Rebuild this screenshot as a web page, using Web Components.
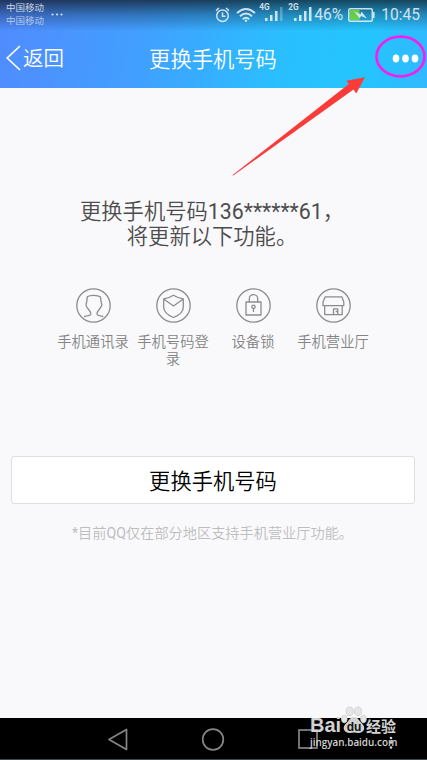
<!DOCTYPE html>
<html lang="zh-CN">
<head>
<meta charset="utf-8">
<title>更换手机号码</title>
<style>
	body {
		margin: 0;
		background: #f9f9fb;
		font-family: Roboto, "Noto Sans CJK SC", sans-serif;
		font-weight: 350;
	}
</style>
</head>
<body>
<phone-screen>
	<app-header slot="header" back="返回">更换手机号码</app-header>
	<feature-intro>
		更换手机号码<span>136******61</span>，<br>将更新以下功能。
		<feature-item slot="items" icon="contacts">手机通讯录</feature-item>
		<feature-item slot="items" icon="login">手机号码登录</feature-item>
		<feature-item slot="items" icon="lock">设备锁</feature-item>
		<feature-item slot="items" icon="shop">手机营业厅</feature-item>
	</feature-intro>
	<action-button>更换手机号码</action-button>
	<foot-note><span>*</span>目前<span>QQ</span>仅在部分地区支持手机营业厅功能。</foot-note>
	<nav-bar slot="footer"></nav-bar>
	<site-watermark slot="overlay"></site-watermark>
	<pointer-marks slot="overlay"></pointer-marks>
</phone-screen>

<script>
function define(name, render) {
	customElements.define(name, class extends HTMLElement {
		constructor() {
			super();
			this.attachShadow({ mode: 'open' });
			this.shadowRoot.innerHTML = render(this);
		}
	});
}

define('phone-screen', () => `
	<style>
	:host {
		position: relative;
		display: flex;
		flex-direction: column;
		width: 427px;
		height: 760px;
		overflow: hidden;
	}
	main {
		flex: 1;
		display: flex;
		flex-direction: column;
	}
	</style>
	<slot name="header"></slot>
	<main><slot></slot></main>
	<slot name="footer"></slot>
	<slot name="overlay"></slot>
`);

define('status-bar', () => `
	<style>
	:host {
		display: flex;
		height: 30px;
		color: #fff;
		opacity: 0.78;
	}
	.carrier {
		padding: 2px 0 0 6px;
		font-size: 9.5px;
		line-height: 12.7px;
	}
	.carrier div + div { opacity: 0.8; }
	.more { margin: 13px 0 0 7px; width: 12px; height: 3px; }
	.right {
		margin-left: auto;
		display: flex;
		align-items: center;
		padding-right: 7px;
		font-size: 15.6px;
		font-weight: 400;
		line-height: 30px;
	}
	svg { display: block; }
	.alarm { margin-right: 6px; }
	.wifi { margin-right: 3px; }
	.signal { display: flex; position: relative; width: 29px; height: 30px; }
	.signal.second { width: 26px; }
	.signal span {
		font-size: 8.3px;
		font-weight: 700;
		line-height: 9px;
		padding-top: 3px;
	}
	.signal svg { position: absolute; left: 5px; top: 6px; }
	.battery { margin: 0 6px 0 5px; }
	</style>
	<div class="carrier"><div>中国移动</div><div>中国移动</div></div>
	<svg class="more" viewBox="0 0 12 3" fill="#fff"><circle cx="1.5" cy="1.5" r="1.1"/><circle cx="6" cy="1.5" r="1.1"/><circle cx="10.5" cy="1.5" r="1.1"/></svg>
	<div class="right">
		<svg class="alarm" width="15" height="16" viewBox="0 0 15 16" fill="none" stroke="#fff" stroke-width="1.5"><circle cx="7.5" cy="8.7" r="5.8"/><path d="M7.5 5.2v4h3M1 3.6 4 1M14 3.6 11 1"/></svg>
		<svg class="wifi" width="20" height="16" viewBox="0 0 20 16" fill="none" stroke="#fff" stroke-width="2"><path d="M1 6Q10-2 19 6M4 9.2Q10 3.8 16 9.2M6.8 12.2Q10 9.2 13.2 12.2"/><circle cx="10" cy="13.8" r="1.2" fill="#fff" stroke="none"/></svg>
		<div class="signal"><span>4G</span><svg width="19" height="16"><g fill="#fff"><path d="M1 12h2.500v3H1zM6 9h2.500v6H6zM11 5h2.500v10H11z"/><path d="M16 1h2.500v14H16z" opacity=".35"/></g></svg></div>
		<div class="signal second"><span>2G</span><svg width="19" height="16"><path fill="#fff" d="M1 12h2.500v3H1zM6 9h2.500v6H6zM11 5h2.500v10H11zM16 1h2.500v14H16z"/></svg></div>
		<span>46%</span>
		<svg class="battery" width="27" height="14" viewBox="0 0 27 14"><rect x=".8" y=".8" width="23.500" height="12.400" rx="1.500" fill="none" stroke="#fff" stroke-width="1.500"/><path d="M25 4h1.600v6H25z" fill="#fff"/><path d="M2 2h9.500v10H2z" fill="#7be02a"/><path d="M6 3.200l6.500 3 1-2.700L19 10.500l-6-2.600-1.200 2.600z" fill="#fff"/></svg>
		<span>10:45</span>
	</div>
`);

define('app-header', el => `
	<style>
	:host {
		display: block;
		height: 88px;
		color: #fff;
		background:
			linear-gradient(rgba(15, 20, 30, 0.72), rgba(15, 30, 50, 0.35) 14px, transparent 31px),
			linear-gradient(98deg, #518bff 0%, #419fff 33%, #2abfff 66%, #24c5ff 85%, #31b8ff 100%);
	}
	.bar {
		display: grid;
		grid-template-columns: 1fr auto 1fr;
		align-items: center;
		height: 56px;
		font-size: 21.3px;
	}
	.back {
		display: flex;
		align-items: center;
		gap: 2px;
		padding-left: 6px;
		font-size: 20.5px;
	}
	.back span, .title { padding-bottom: 2px; }
	.title { margin-right: 1px; }
	.menu { justify-self: end; padding: 1px 8px 0 0; }
	svg { display: block; }
	</style>
	<status-bar></status-bar>
	<div class="bar">
		<div class="back">
			<svg width="15" height="26" viewBox="0 0 15 26" fill="none" stroke="#fff" stroke-width="1.700"><path d="M14 1 1.200 13 14 25"/></svg>
			<span>${el.getAttribute('back')}</span>
		</div>
		<div class="title"><slot></slot></div>
		<svg class="menu" width="27" height="9" fill="#fff"><ellipse cx="4" cy="4.500" rx="3.300" ry="3.900"/><ellipse cx="13.500" cy="4.500" rx="3.300" ry="3.900"/><ellipse cx="23" cy="4.500" rx="3.300" ry="3.900"/></svg>
	</div>
`);

define('feature-intro', () => `
	<style>
	:host {
		display: block;
		padding-top: 111px;
		height: 257px;
		text-align: center;
	}
	.text {
		margin-right: 3px;
		color: #4c4c4c;
		font-size: 21.3px;
		line-height: 25px;
	}
	::slotted(span) { font-weight: 400; }
	.items {
		display: grid;
		grid-template-columns: repeat(4, 80px);
		justify-content: center;
		margin: 39px 1px 0 0;
	}
	</style>
	<div class="text"><slot></slot></div>
	<div class="items"><slot name="items"></slot></div>
`);

const icons = {
	contacts: '<path d="M8 28.500c3.500-.4 6.500-.8 6.800-2.300.2-1.700-.3-2.400-1.800-4.200-1.400-1.600-3-3.300-3-5.200 1-3 1-5.500 1.300-8 2.500-2 10.500-2 13.200.2.300 2.500.5 5 1.300 7.800 0 2-1.600 3.600-3 5.200-1.600 1.800-2 2.500-1.800 4.200.3 1.500 3.300 1.900 6.300 2.300"/>',
	login: '<path d="M17.500 7.300c-3 2-6.200 3.200-9.800 3.600v8.300c0 5 5.500 8.500 9.800 10.300 4.300-1.800 9.800-5.300 9.800-10.300v-8.300c-3.600-.4-6.800-1.600-9.800-3.600zM7.700 11l9.800 7 9.800-7"/>',
	lock: '<path d="M10 14h15v13H10zM13.300 14v-3.200a4.200 4.200 0 0 1 8.400 0V14M17.500 20.500v3.500"/><circle cx="17.500" cy="18.800" r="1.700"/>',
	shop: '<path d="M9.200 8.800h16.600l2 5.200v3.600H7V14zM8.700 17.600v9.100h17.500v-9.100M17.500 26.700v-5.900h4.300v5.900M19.700 23.500h1.500"/>',
};

define('feature-item', el => `
	<style>
	:host {
		display: flex;
		flex-direction: column;
		align-items: center;
		color: #848484;
		font-size: 14.3px;
		line-height: 17px;
	}
	svg { display: block; margin-bottom: 11px; }
	</style>
	<svg width="35" height="35" viewBox="0 0 35 35" fill="none" stroke="#8c8c8c" stroke-width="1.300" stroke-linejoin="round">
		<circle cx="17.500" cy="17.500" r="16.700"/>${icons[el.getAttribute('icon')]}
	</svg>
	<div><slot></slot></div>
`);

define('action-button', () => `
	<style>
	:host {
		display: flex;
		align-items: center;
		justify-content: center;
		box-sizing: border-box;
		height: 48px;
		margin: 0 12px 0 11px;
		padding-bottom: 2px;
		border: 1px solid #dedfe0;
		border-radius: 3px;
		background: #fff;
		color: #000;
		font-size: 21.3px;
	}
	</style>
	<slot></slot>
`);

define('foot-note', () => `
	<style>
	:host {
		display: block;
		padding: 20px 2px 0 0;
		text-align: center;
		color: #bdbdbd;
		font-size: 14.2px;
		line-height: 18px;
	}
	::slotted(span) { font-weight: 400; }
	</style>
	<slot></slot>
`);

define('nav-bar', () => `
	<style>
	:host {
		display: grid;
		grid-template-columns: repeat(3, 95px);
		justify-content: center;
		justify-items: center;
		align-items: center;
		box-sizing: border-box;
		height: 42px;
		padding-right: 1px;
		background: #000;
		border-bottom: 1px solid #40484f;
	}
	svg { display: block; fill: none; stroke: #858585; stroke-width: 1.7; }
	</style>
	<svg width="24" height="24"><path d="M3 12.500 20.500 2.500v20z" stroke-linejoin="round"/></svg>
	<svg width="24" height="24"><circle cx="12" cy="12.500" r="10.300"/></svg>
	<svg width="24" height="24"><rect x="3" y="3" width="18" height="18"/></svg>
`);

define('site-watermark', () => `
	<style>
	:host {
		position: absolute;
		left: 310px;
		top: 705px;
		width: 90px;
		color: #d2d2d2;
		font-family: "Liberation Sans", "Noto Sans CJK SC", sans-serif;
	}
	.logo {
		display: flex;
		align-items: flex-end;
		height: 30px;
		font-weight: 700;
	}
	.bai { font-size: 20px; line-height: 19px; width: 31px; }
	.jy { font-size: 15px; line-height: 17px; }
	svg { display: block; margin-bottom: 1px; }
	.paw { margin-right: -1px; }
	.url {
		font-family: "Open Sans", sans-serif;
		font-size: 9.9px;
		font-weight: 600;
		line-height: 14px;
		white-space: nowrap;
	}
	.dots { position: absolute; left: 79px; top: 31px; }
	</style>
	<div class="logo">
		<span class="bai">Bai</span>
		<svg class="paw" width="26" height="28" viewBox="0 0 26 28">
			<g fill="#e6e6e6" stroke="#cfcfcf" stroke-width=".9"><ellipse cx="8.700" cy="5.300" rx="3.500" ry="4.300"/><ellipse cx="17" cy="5.300" rx="3.500" ry="4.300"/><ellipse cx="3.300" cy="13" rx="2.800" ry="3.800"/><ellipse cx="22.500" cy="13" rx="2.800" ry="3.800"/></g>
			<path d="M13 11c4 0 5 3.500 7 5.500s4 4 3 7-4 4-10 3c-6 1-9 0-10-3s1-5 3-7 3-5.500 7-5.500z" fill="#d2d2d2"/>
			<text x="13" y="24.500" text-anchor="middle" font-size="12" font-weight="700" fill="#111">du</text>
		</svg>
		<span class="jy">经验</span>
	</div>
	<div class="url">jingyan.baidu.com</div>
	<svg class="dots" width="4" height="14" fill="#d2d2d2"><circle cx="2" cy="2" r="1.300"/><circle cx="2" cy="6.500" r="1.300"/><circle cx="2" cy="11.500" r="1.300"/></svg>
`);

// circle around the menu button and the arrow that points at it
define('pointer-marks', () => `
	<style>
	:host {
		position: absolute;
		left: 228px;
		top: 32px;
		pointer-events: none;
	}
	svg { display: block; }
	</style>
	<svg width="199" height="150" viewBox="228 32 199 150">
		<ellipse cx="400.500" cy="56.500" rx="24" ry="19.800" fill="none" stroke="#f51df0" stroke-width="2.700"/>
		<path d="M365 77.200 346.300 80.700 348.800 84 232.300 175.300 233.200 175.600 353.500 89.500 356.200 93.500z" fill="#fc3a38"/>
	</svg>
`);
</script>
</body>
</html>
